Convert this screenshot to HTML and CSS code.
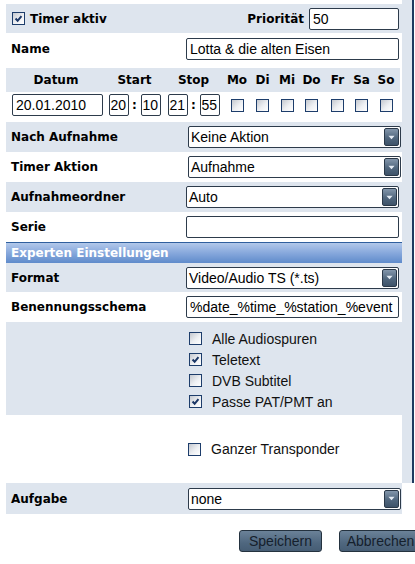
FILE: index.html
```html
<!DOCTYPE html>
<html lang="de">
<head>
<meta charset="utf-8">
<title>Timer</title>
<link rel="stylesheet" href="styles.css">
</head>
<body>
<div class="frame">
  <div class="main">
    <div class="row-top alt">
      <span class="cb on"><svg viewBox="0 0 13 13"><path d="M3 6.5 L5.5 9.2 L10 3.6"/></svg></span>
      <span class="lbl">Timer aktiv</span>
      <span class="lbl prio">Priorität</span>
      <span class="field w-prio">50</span>
    </div>
    <div class="row name">
      <span class="lbl">Name</span>
      <span class="field">Lotta &amp; die alten Eisen</span>
    </div>

    <div class="days head alt">
      <span>Datum</span><span>Start</span><span>Stop</span>
      <span>Mo</span><span>Di</span><span>Mi</span><span>Do</span><span>Fr</span><span>Sa</span><span>So</span>
    </div>
    <div class="days inputs">
      <span class="cell-date"><span class="field w-date">20.01.2010</span></span>
      <span class="time"><span class="field w-t">20</span><b class="colon">:</b><span class="field w-t">10</span></span>
      <span class="time"><span class="field w-t">21</span><b class="colon">:</b><span class="field w-t">55</span></span>
      <span class="cb"></span><span class="cb"></span><span class="cb"></span><span class="cb"></span><span class="cb"></span><span class="cb"></span><span class="cb"></span>
    </div>

    <div class="row alt">
      <span class="lbl">Nach Aufnahme</span>
      <div class="select shift"><span>Keine Aktion</span><span class="btn"><svg viewBox="0 0 8 5"><path d="M0.5 0.5 H7.5 L4 4.5 Z"/></svg></span></div>
    </div>
    <div class="row">
      <span class="lbl">Timer Aktion</span>
      <div class="select shift"><span>Aufnahme</span><span class="btn"><svg viewBox="0 0 8 5"><path d="M0.5 0.5 H7.5 L4 4.5 Z"/></svg></span></div>
    </div>
    <div class="row alt">
      <span class="lbl">Aufnahmeordner</span>
      <div class="select"><span>Auto</span><span class="btn"><svg viewBox="0 0 8 5"><path d="M0.5 0.5 H7.5 L4 4.5 Z"/></svg></span></div>
    </div>
    <div class="row">
      <span class="lbl">Serie</span>
      <span class="field"></span>
    </div>

    <div class="section">Experten Einstellungen</div>

    <div class="row alt short">
      <span class="lbl">Format</span>
      <div class="select"><span>Video/Audio TS (*.ts)</span><span class="btn"><svg viewBox="0 0 8 5"><path d="M0.5 0.5 H7.5 L4 4.5 Z"/></svg></span></div>
    </div>
    <div class="row">
      <span class="lbl">Benennungsschema</span>
      <span class="field">%date_%time_%station_%event</span>
    </div>

    <div class="opts alt">
      <div class="opt"><span class="cb"></span><span>Alle Audiospuren</span></div>
      <div class="opt"><span class="cb on"><svg viewBox="0 0 13 13"><path d="M3 6.5 L5.5 9.2 L10 3.6"/></svg></span><span>Teletext</span></div>
      <div class="opt"><span class="cb"></span><span>DVB Subtitel</span></div>
      <div class="opt"><span class="cb on"><svg viewBox="0 0 13 13"><path d="M3 6.5 L5.5 9.2 L10 3.6"/></svg></span><span>Passe PAT/PMT an</span></div>
    </div>
    <div class="opts-white">
      <div class="opt"><span class="cb"></span><span>Ganzer Transponder</span></div>
    </div>
  </div>
  <div class="strip"></div>
</div>

<div class="row alt task">
  <span class="lbl">Aufgabe</span>
  <div class="select shift"><span>none</span><span class="btn"><svg viewBox="0 0 8 5"><path d="M0.5 0.5 H7.5 L4 4.5 Z"/></svg></span></div>
</div>

<div class="buttons">
  <span class="button">Speichern</span>
  <span class="button">Abbrechen</span>
</div>
</body>
</html>
```
FILE: styles.css
```css
html, body {
  margin: 0;
  padding: 0;
  background: #ffffff;
  overflow: hidden;
}
body {
  width: 415px;
  height: 564px;
  font-family: "Liberation Sans", Arial, sans-serif;
  font-size: 14px;
  color: #000;
}
.frame {
  display: flex;
  align-items: stretch;
}
.main {
  margin-left: 6px;
  padding-top: 4px;
  width: 396px;
}
.strip {
  width: 10px;
  background: #dee5ee;
  border-right: 2px solid #1e3a5f;
}
.alt {
  background: #dee5ee;
}
.lbl {
  font-family: "DejaVu Sans", Verdana, sans-serif;
  font-weight: bold;
  font-size: 12px;
  color: #000;
}

/* top row */
.row-top {
  height: 29px;
  display: flex;
  align-items: center;
  padding-left: 6px;
  padding-right: 3px;
}
.row-top .cb {
  margin-right: 5px;
}
.row-top .prio {
  margin-left: auto;
  margin-right: 5px;
}

/* generic field rows */
.row {
  display: grid;
  grid-template-columns: 180px 1fr;
  align-items: center;
  height: 30px;
  padding-right: 3px;
}
.row .lbl {
  padding-left: 5px;
}
.row.name {
  height: 31px;
  margin-bottom: 4px;
}
.row.short {
  height: 29px;
}
.row.task {
  margin-left: 6px;
  width: 393px;
  height: 31px;
}

.field {
  box-sizing: border-box;
  display: flex;
  align-items: center;
  height: 22px;
  padding-left: 3px;
  border: 1px solid #2d3b4b;
  border-radius: 2px;
  background: #fff;
  white-space: nowrap;
  overflow: hidden;
  font-size: 14px;
}
.w-prio { width: 90px; }
.w-date { width: 91px; }
.w-t { width: 20px; padding-left: 1px; }

/* select mimic */
.select {
  box-sizing: border-box;
  display: flex;
  align-items: center;
  justify-content: space-between;
  height: 22px;
  width: 213px;
  padding-left: 2px;
  padding-right: 1px;
  border: 1px solid #2d3b4b;
  border-radius: 2px;
  background: #fff;
  white-space: nowrap;
}
.select.shift {
  margin-left: 2px;
}
.select .btn {
  box-sizing: border-box;
  width: 15px;
  height: 18px;
  border: 1px solid #2a3848;
  border-radius: 2px;
  background: linear-gradient(#8396ab, #51677e 55%, #3e5369);
  display: flex;
  align-items: center;
  justify-content: center;
}
.select .btn svg {
  width: 7px;
  height: 5px;
  fill: #e4ebf3;
}

/* days grid */
.days {
  display: grid;
  grid-template-columns: 100px 57px 61px 26px 25px 24px 25px 27px 21px 28px;
  width: 394px;
  align-items: center;
  justify-items: center;
}
.days.head {
  height: 24px;
  font-family: "DejaVu Sans", Verdana, sans-serif;
  font-weight: bold;
  font-size: 12px;
}
.days.inputs {
  height: 26px;
  margin-bottom: 4px;
}
.cell-date {
  justify-self: end;
  margin-right: 3px;
}
.time {
  display: flex;
  align-items: center;
}
.colon {
  font-family: "DejaVu Sans", Verdana, sans-serif;
  font-size: 12px;
  width: 12px;
  text-align: center;
}

/* checkbox */
.cb {
  box-sizing: border-box;
  display: inline-block;
  width: 13px;
  height: 13px;
  border: 1px solid #1d3d6b;
  background: linear-gradient(135deg, #c4c8cf 0%, #eef0f3 55%, #ffffff 100%);
  flex: none;
}
.cb svg {
  display: block;
  width: 11px;
  height: 11px;
  fill: none;
  stroke: #1b3766;
  stroke-width: 2.4;
}

/* section header */
.section {
  box-sizing: border-box;
  height: 21px;
  border-top: 1px solid #2f5f9e;
  background: linear-gradient(#b2c8ea, #87a8dc 50%, #5f8bcb);
  color: #fff;
  font-family: "DejaVu Sans", Verdana, sans-serif;
  font-weight: bold;
  font-size: 12px;
  padding-left: 5px;
  display: flex;
  align-items: center;
}

/* option lists */
.opts {
  box-sizing: border-box;
  height: 93px;
  padding-top: 6px;
  padding-left: 183px;
}
.opts-white {
  height: 68px;
  display: flex;
  align-items: center;
  padding-left: 182px;
}
.opt {
  display: flex;
  align-items: center;
  height: 21px;
  gap: 10px;
  color: #111;
}

/* buttons */
.buttons {
  display: flex;
  gap: 17px;
  margin-top: 16px;
  padding-left: 239px;
}
.button {
  box-sizing: border-box;
  flex: none;
  width: 83px;
  height: 22px;
  display: flex;
  align-items: center;
  justify-content: center;
  border: 1px solid #24323f;
  border-radius: 3px;
  background: linear-gradient(#6b8298, #4f677f 60%, #465d74);
  color: #15202c;
  font-size: 14px;
}
```
